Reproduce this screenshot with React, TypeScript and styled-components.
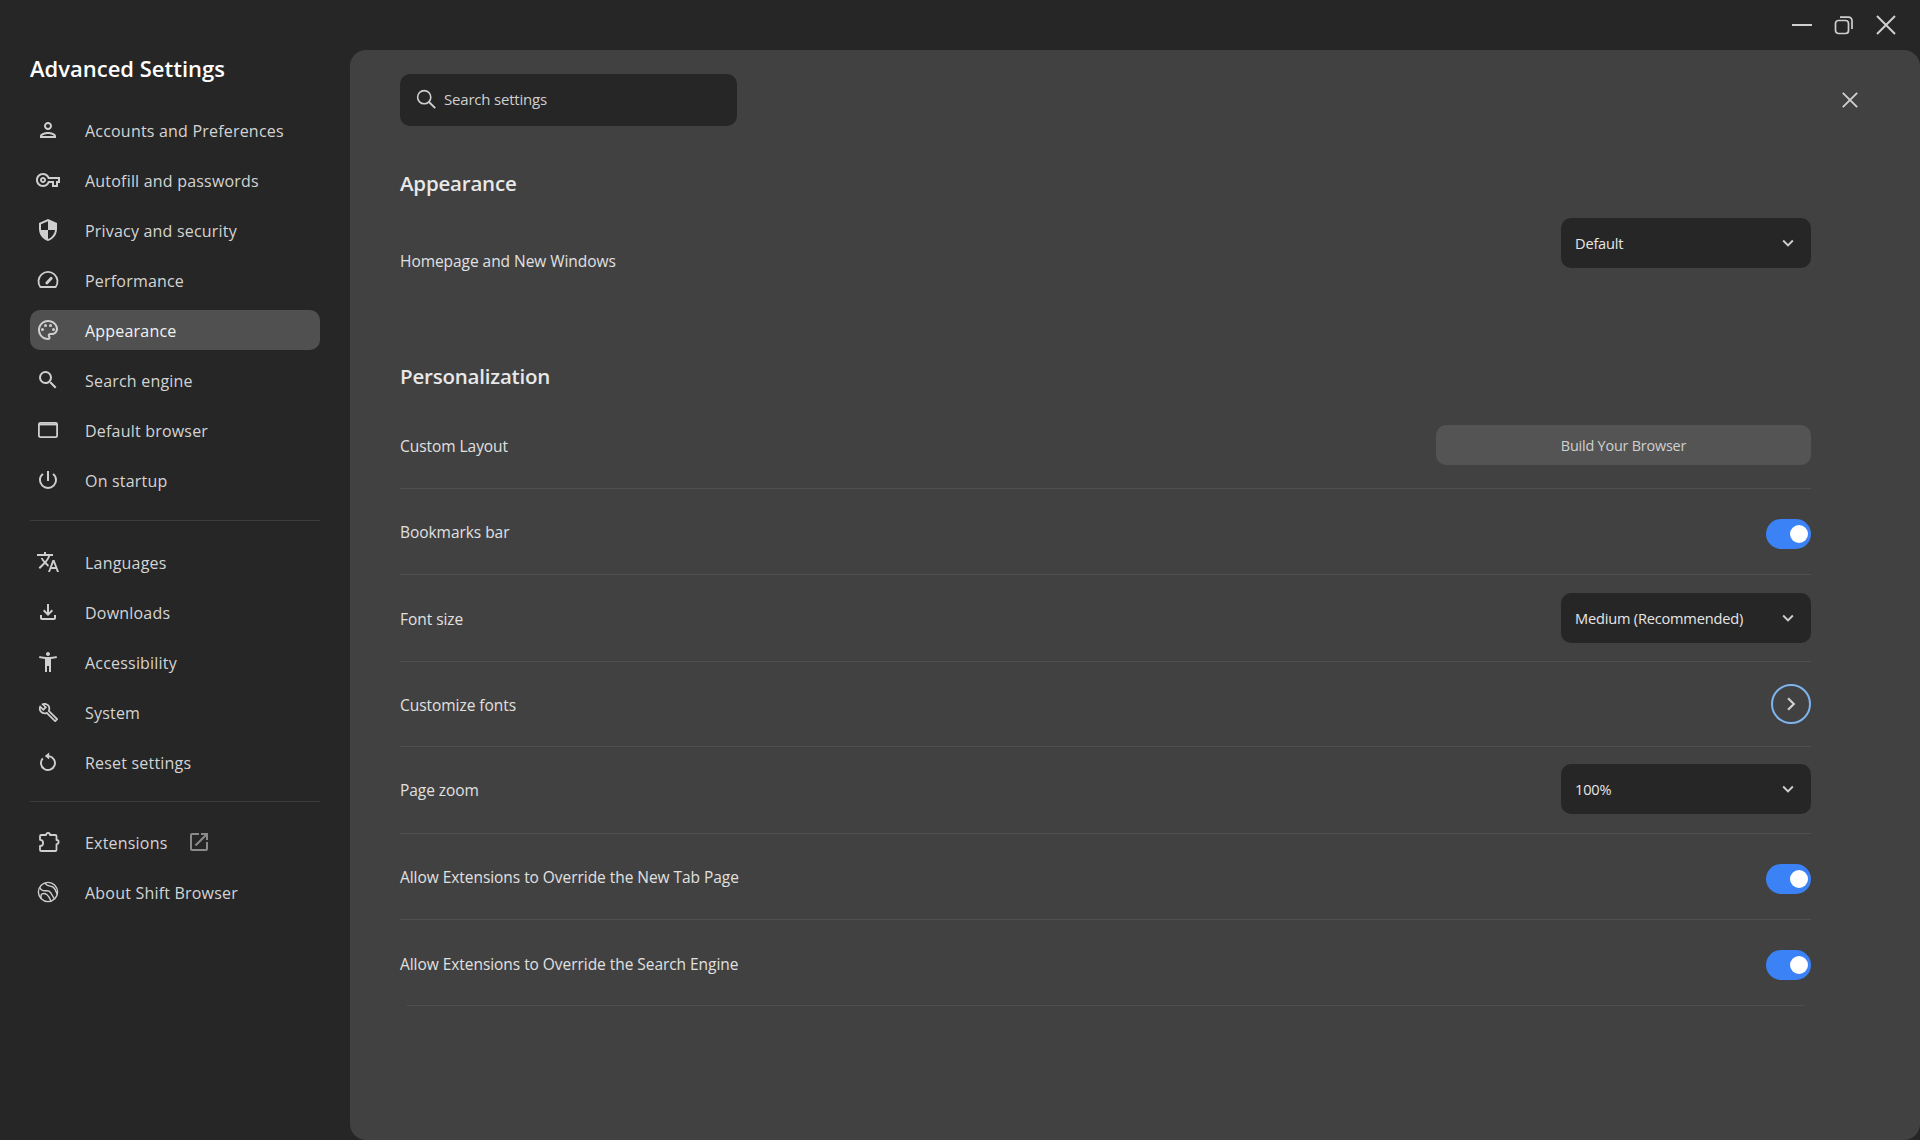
import React from 'react';
import styled, { createGlobalStyle } from 'styled-components';
import {
    MdOutlinePerson,
    MdOutlineVpnKey,
    MdOutlineSecurity,
    MdOutlinePalette,
    MdSearch,
    MdOutlinePowerSettingsNew,
    MdOutlineTranslate,
    MdOutlineFileDownload,
    MdOutlineAccessibilityNew,
    MdOutlineBuild,
    MdOutlineOpenInNew,
    MdKeyboardArrowDown,
    MdKeyboardArrowRight,
} from 'react-icons/md';

const GlobalStyle = createGlobalStyle`
    html, body {
        margin: 0;
        padding: 0;
        background: #262626;
    }
    body {
        font-family: "Open Sans", "Noto Sans", sans-serif;
        color: #e2e2e2;
    }
`;

const Page = styled.div`
    display: flex;
    width: 1920px;
    height: 1140px;
    overflow: hidden;
    background: #262626;
`;

const Sidebar = styled.aside`
    box-sizing: border-box;
    flex: 0 0 350px;
    padding: 50px 30px 0;
`;

const SidebarTitle = styled.h1`
    margin: -1px 0 23px;
    font-size: 22px;
    line-height: 38px;
    font-weight: 600;
    color: #fff;
`;

const NavGroup = styled.nav`
    display: flex;
    flex-direction: column;
    gap: 10px;
`;

const NavItem = styled.div<{ $active?: boolean }>`
    box-sizing: border-box;
    display: flex;
    align-items: center;
    height: 40px;
    padding-top: 2px;
    border-radius: 10px;
    font-size: 16px;
    letter-spacing: 0.2px;
    color: ${(p) => (p.$active ? '#f2f2f2' : '#d4d4d4')};
    background: ${(p) => (p.$active ? '#505050' : 'transparent')};
`;

const NavIcon = styled.span`
    display: flex;
    align-items: center;
    justify-content: center;
    flex: 0 0 24px;
    width: 24px;
    height: 24px;
    margin: -2px 25px 0 6px;
    color: #cfcfcf;
    font-size: 24px;
`;

const NavDivider = styled.hr<{ $top: number; $bottom: number }>`
    height: 1px;
    margin: ${(p) => p.$top}px 0 ${(p) => p.$bottom}px;
    border: 0;
    background: #3d3d3d;
`;

const ExternalIcon = styled.span`
    display: flex;
    margin: -2px 0 0 19px;
    color: #8a8a8a;
    font-size: 24px;
`;

const Main = styled.div`
    display: flex;
    flex: 1;
    flex-direction: column;
    min-width: 0;
`;

const TitleBar = styled.header`
    display: flex;
    flex: 0 0 50px;
    align-items: center;
    justify-content: flex-end;
    gap: 22px;
    padding: 0 24px 0 0;
    color: #cfcfcf;
`;

const Panel = styled.main`
    position: relative;
    box-sizing: border-box;
    flex: 1;
    padding: 24px 109px 0 50px;
    border-radius: 16px;
    background: #414141;
`;

const PanelClose = styled.button`
    position: absolute;
    top: 42px;
    right: 62px;
    display: flex;
    padding: 0;
    border: 0;
    background: none;
    color: #d0d0d0;
`;

const SearchBox = styled.div`
    box-sizing: border-box;
    display: flex;
    align-items: center;
    gap: 6px;
    width: 337px;
    height: 52px;
    padding: 0 0 2px 14px;
    border-radius: 10px;
    background: #262626;
    color: #cfcfcf;
    font-size: 15px;
    font-weight: 500;
    letter-spacing: -0.2px;
`;

const SectionTitle = styled.h2<{ $top: number; $bottom: number }>`
    margin: ${(p) => p.$top}px 0 ${(p) => p.$bottom}px;
    font-size: 20.5px;
    line-height: 30px;
    font-weight: 600;
    letter-spacing: -0.2px;
    color: #e8e8e8;
`;

const Row = styled.div<{ $height: number; $plain?: boolean; $inset?: boolean; $lift?: number }>`
    position: relative;
    box-sizing: border-box;
    display: flex;
    align-items: center;
    justify-content: space-between;
    height: ${(p) => p.$height}px;
    padding-bottom: ${(p) => p.$lift ?? 0}px;
    ${(p) => !p.$plain && !p.$inset && 'border-bottom: 1px solid #505050;'}
    ${(p) =>
        p.$inset &&
        `&::after {
            content: '';
            position: absolute;
            left: 7px;
            right: 7px;
            bottom: 0;
            height: 1px;
            background: #505050;
        }`}
`;

const RowLabel = styled.span<{ $shift?: number }>`
    margin-top: ${(p) => p.$shift ?? 1}px;
    font-size: 15.5px;
    letter-spacing: -0.05px;
    color: #e0e0e0;
`;

const Select = styled.div`
    box-sizing: border-box;
    display: flex;
    align-items: center;
    justify-content: space-between;
    width: 250px;
    height: 50px;
    padding: 0 12px 0 14px;
    border-radius: 10px;
    background: #262626;
    font-size: 14.6px;
    letter-spacing: -0.2px;
    color: #e6e6e6;

    svg {
        color: #cfcfcf;
    }
`;

const WideButton = styled.button`
    width: 375px;
    height: 40px;
    border: 0;
    border-radius: 10px;
    background: #545454;
    font-family: inherit;
    font-size: 14.4px;
    letter-spacing: -0.2px;
    color: #d0d0d0;
`;

const Toggle = styled.span`
    position: relative;
    flex: 0 0 45px;
    width: 45px;
    height: 30px;
    margin-top: 4px;
    border-radius: 15px;
    background: #3b82f6;

    &::after {
        content: '';
        position: absolute;
        top: 6px;
        right: 3px;
        width: 18px;
        height: 18px;
        border-radius: 50%;
        background: #fff;
    }
`;

const CircleButton = styled.button`
    display: flex;
    align-items: center;
    justify-content: center;
    width: 40px;
    height: 40px;
    padding: 0;
    border: 2px solid #7fb4ee;
    border-radius: 50%;
    background: transparent;
    color: #cfcfcf;
`;

const GaugeIcon = () => (
    <svg width="24" height="24" viewBox="0 0 24 24" fill="none" stroke="currentColor" strokeWidth="1.8">
        <path d="M4.3 19A9.5 9.5 0 1 1 19.7 19z" strokeLinejoin="round" />
        <path d="M10.8 15 15.2 10.2" strokeWidth="2.8" strokeLinecap="round" />
    </svg>
);

const WindowIcon = () => (
    <svg width="24" height="24" viewBox="0 0 24 24" fill="none" stroke="currentColor" strokeWidth="1.8">
        <rect x="2.9" y="4.9" width="18.2" height="14.2" rx="1.4" />
        <path d="M3 6.4h18" strokeWidth="2" />
    </svg>
);

const ResetIcon = () => (
    <svg width="24" height="24" viewBox="0 0 24 24" fill="none" stroke="currentColor" strokeWidth="1.9">
        <path d="M13 6.1a7 7 0 1 1-6.2 2.2" />
        <path d="M13.2 2.6 8.8 6l4.4 3.4z" fill="currentColor" stroke="none" />
    </svg>
);

const ExtensionIcon = () => (
    <svg width="24" height="24" viewBox="0 0 24 24" fill="none" stroke="currentColor" strokeWidth="1.8" strokeLinejoin="round">
        <path d="M4 6.3a1.3 1.3 0 0 1 1.3-1.3H10a2 2 0 0 1 4 0h5.2a1.3 1.3 0 0 1 1.3 1.3V10a2.1 2.1 0 0 1 0 4.2v5.5a1.3 1.3 0 0 1-1.3 1.3H5.3A1.3 1.3 0 0 1 4 19.7V16a3.1 3.1 0 0 0 0-6.2z" />
    </svg>
);

const ShiftIcon = () => (
    <svg width="24" height="24" viewBox="0 0 24 24" fill="none" stroke="currentColor" strokeWidth="1.4">
        <circle cx="12" cy="12" r="9.6" />
        <path d="M3.8 7.4C6 13 10 9.6 13 11.2s3.2 5.2 5.6 7.8" />
        <path d="M5.2 18.8C3.6 11.4 9.4 13.6 11 14.8s3.2 4.4 4 6.2" />
        <path d="M9 3C11 7 15 5.4 17.4 7.4s2.6 4.4 3.8 7" />
    </svg>
);

const SearchIcon = () => (
    <svg width="24" height="24" viewBox="0 0 24 24" fill="none" stroke="currentColor" strokeWidth="1.6">
        <circle cx="10.2" cy="10.2" r="6.6" />
        <path d="m15 15 6.2 6.2" strokeWidth="1.9" />
    </svg>
);

const MinimizeIcon = () => (
    <svg width="20" height="20" viewBox="0 0 20 20" fill="none" stroke="currentColor" strokeWidth="2">
        <path d="M0 10h20" />
    </svg>
);

const RestoreIcon = () => (
    <svg width="20" height="20" viewBox="0 0 20 20" fill="none" stroke="currentColor" strokeWidth="1.7">
        <rect x="1.5" y="5.5" width="13" height="13" rx="3" />
        <path d="M6 2.2h8.5a3.5 3.5 0 0 1 3.5 3.5V14" />
    </svg>
);

const CloseIcon = ({ size }: { size: number }) => (
    <svg width={size} height={size} viewBox="0 0 20 20" fill="none" stroke="currentColor" strokeWidth={size > 18 ? 2 : 2.3}>
        <path d="M1 1l18 18M19 1 1 19" />
    </svg>
);

const mainNav = [
    { label: 'Accounts and Preferences', icon: <MdOutlinePerson size={26} /> },
    { label: 'Autofill and passwords', icon: <MdOutlineVpnKey /> },
    { label: 'Privacy and security', icon: <MdOutlineSecurity /> },
    { label: 'Performance', icon: <GaugeIcon /> },
    { label: 'Appearance', icon: <MdOutlinePalette />, active: true },
    { label: 'Search engine', icon: <MdSearch /> },
    { label: 'Default browser', icon: <WindowIcon /> },
    { label: 'On startup', icon: <MdOutlinePowerSettingsNew /> },
];

const toolsNav = [
    { label: 'Languages', icon: <MdOutlineTranslate /> },
    { label: 'Downloads', icon: <MdOutlineFileDownload /> },
    { label: 'Accessibility', icon: <MdOutlineAccessibilityNew /> },
    { label: 'System', icon: <MdOutlineBuild size={21} /> },
    { label: 'Reset settings', icon: <ResetIcon /> },
];

const Dropdown = ({ value }: { value: string }) => (
    <Select>
        {value}
        <MdKeyboardArrowDown size={22} />
    </Select>
);

export default function App() {
    return (
        <Page>
            <GlobalStyle />
            <Sidebar>
                <SidebarTitle>Advanced Settings</SidebarTitle>
                <NavGroup>
                    {mainNav.map((item) => (
                        <NavItem key={item.label} $active={item.active}>
                            <NavIcon>{item.icon}</NavIcon>
                            {item.label}
                        </NavItem>
                    ))}
                </NavGroup>
                <NavDivider $top={20} $bottom={21} />
                <NavGroup>
                    {toolsNav.map((item) => (
                        <NavItem key={item.label}>
                            <NavIcon>{item.icon}</NavIcon>
                            {item.label}
                        </NavItem>
                    ))}
                </NavGroup>
                <NavDivider $top={19} $bottom={20} />
                <NavGroup>
                    <NavItem>
                        <NavIcon>
                            <ExtensionIcon />
                        </NavIcon>
                        Extensions
                        <ExternalIcon>
                            <MdOutlineOpenInNew />
                        </ExternalIcon>
                    </NavItem>
                    <NavItem>
                        <NavIcon>
                            <ShiftIcon />
                        </NavIcon>
                        About Shift Browser
                    </NavItem>
                </NavGroup>
            </Sidebar>
            <Main>
                <TitleBar>
                    <MinimizeIcon />
                    <RestoreIcon />
                    <CloseIcon size={20} />
                </TitleBar>
                <Panel>
                    <PanelClose>
                        <CloseIcon size={16} />
                    </PanelClose>
                    <SearchBox>
                        <SearchIcon />
                        Search settings
                    </SearchBox>
                    <SectionTitle $top={42} $bottom={0}>
                        Appearance
                    </SectionTitle>
                    <Row $height={90} $plain>
                        <RowLabel $shift={36}>Homepage and New Windows</RowLabel>
                        <Dropdown value="Default" />
                    </Row>
                    <SectionTitle $top={73} $bottom={11}>
                        Personalization
                    </SectionTitle>
                    <Row $height={87}>
                        <RowLabel $shift={2}>Custom Layout</RowLabel>
                        <WideButton>Build Your Browser</WideButton>
                    </Row>
                    <Row $height={86}>
                        <RowLabel>Bookmarks bar</RowLabel>
                        <Toggle />
                    </Row>
                    <Row $height={87}>
                        <RowLabel $shift={2}>Font size</RowLabel>
                        <Dropdown value="Medium (Recommended)" />
                    </Row>
                    <Row $height={85}>
                        <RowLabel>Customize fonts</RowLabel>
                        <CircleButton>
                            <MdKeyboardArrowRight size={26} />
                        </CircleButton>
                    </Row>
                    <Row $height={87} $lift={2}>
                        <RowLabel>Page zoom</RowLabel>
                        <Dropdown value="100%" />
                    </Row>
                    <Row $height={86}>
                        <RowLabel>Allow Extensions to Override the New Tab Page</RowLabel>
                        <Toggle />
                    </Row>
                    <Row $height={86} $inset>
                        <RowLabel>Allow Extensions to Override the Search Engine</RowLabel>
                        <Toggle />
                    </Row>
                </Panel>
            </Main>
        </Page>
    );
}
